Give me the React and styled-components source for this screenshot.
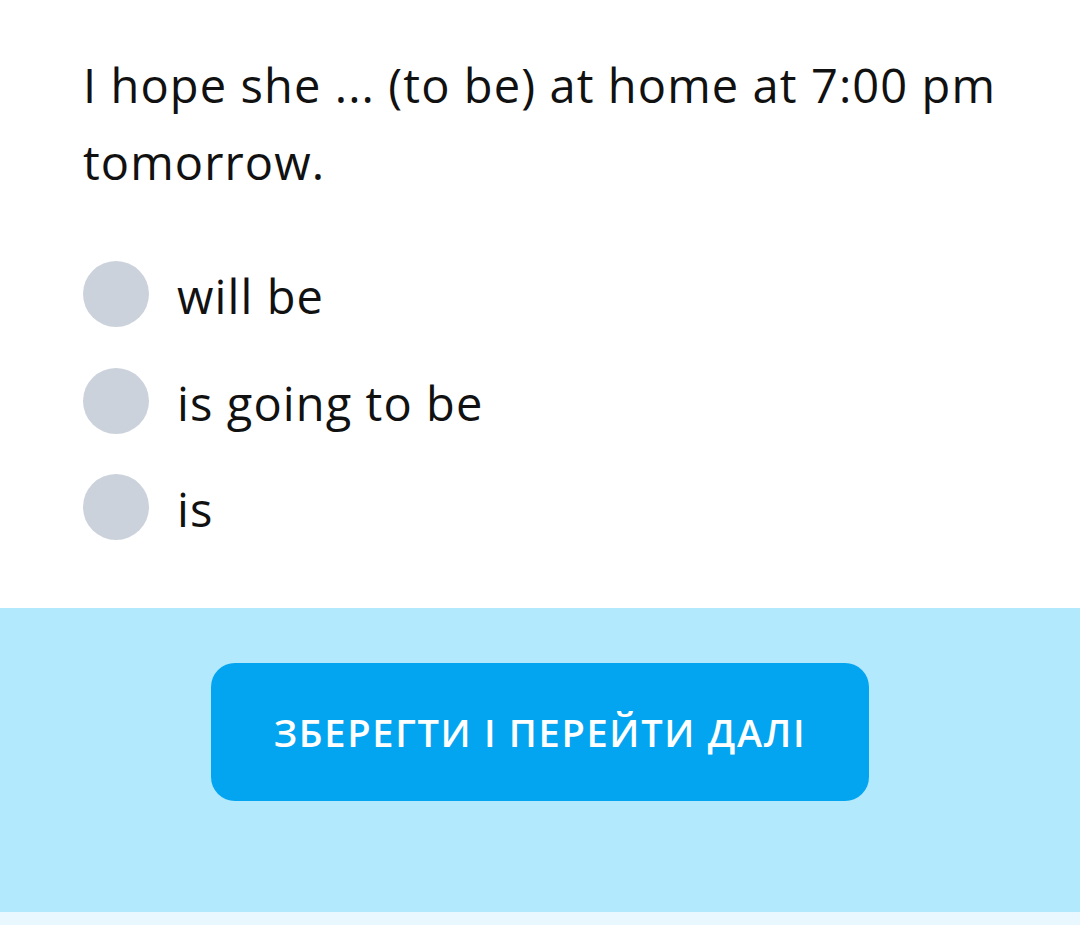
import React from "react";
import styled, { createGlobalStyle } from "styled-components";

const Global = createGlobalStyle`
  html, body { margin: 0; padding: 0; background: #ffffff; }
  body { font-family: "Open Sans", "Noto Sans", sans-serif; color: #111111; }
`;

const Page = styled.div`
  width: 1080px;
  height: 925px;
  display: flex;
  flex-direction: column;
  background: #e8f8fe;
`;

const QuestionArea = styled.div`
  background: #ffffff;
  padding: 47px 40px 68px 83px;
  display: flex;
  flex-direction: column;
`;

const Question = styled.div`
  font-size: 47px;
  letter-spacing: 1.1px;
  line-height: 77px;
  margin: 0 0 60px;
`;

const Options = styled.div`
  display: flex;
  flex-direction: column;
  gap: 40.5px;
`;

const Option = styled.label`
  display: flex;
  align-items: center;
  gap: 28px;
  height: 66px;
  cursor: pointer;
`;

const Radio = styled.span`
  width: 66px;
  height: 66px;
  border-radius: 50%;
  background: #cbd2dc;
  flex-shrink: 0;
`;

const OptionText = styled.span`
  font-size: 47px;
  letter-spacing: 1.1px;
  line-height: 66px;
  padding-top: 4px;
`;

const Footer = styled.div`
  background: #b3e9fc;
  height: 304px;
  display: flex;
  justify-content: center;
  padding-top: 55px;
  box-sizing: border-box;
`;

const Button = styled.button`
  width: 658px;
  height: 138px;
  border: none;
  border-radius: 24px;
  background: #03a5f0;
  color: #ffffff;
  font-family: "Open Sans", "Noto Sans", sans-serif;
  font-weight: 600;
  font-size: 38px;
  letter-spacing: 1.7px;
  cursor: pointer;
`;

const options = ["will be", "is going to be", "is"];

export default function App() {
  return (
    <Page>
      <Global />
      <QuestionArea>
        <Question>I hope she ... (to be) at home at 7:00 pm tomorrow.</Question>
        <Options>
          {options.map((o) => (
            <Option key={o}>
              <Radio />
              <OptionText>{o}</OptionText>
            </Option>
          ))}
        </Options>
      </QuestionArea>
      <Footer>
        <Button>ЗБЕРЕГТИ І ПЕРЕЙТИ ДАЛІ</Button>
      </Footer>
    </Page>
  );
}
